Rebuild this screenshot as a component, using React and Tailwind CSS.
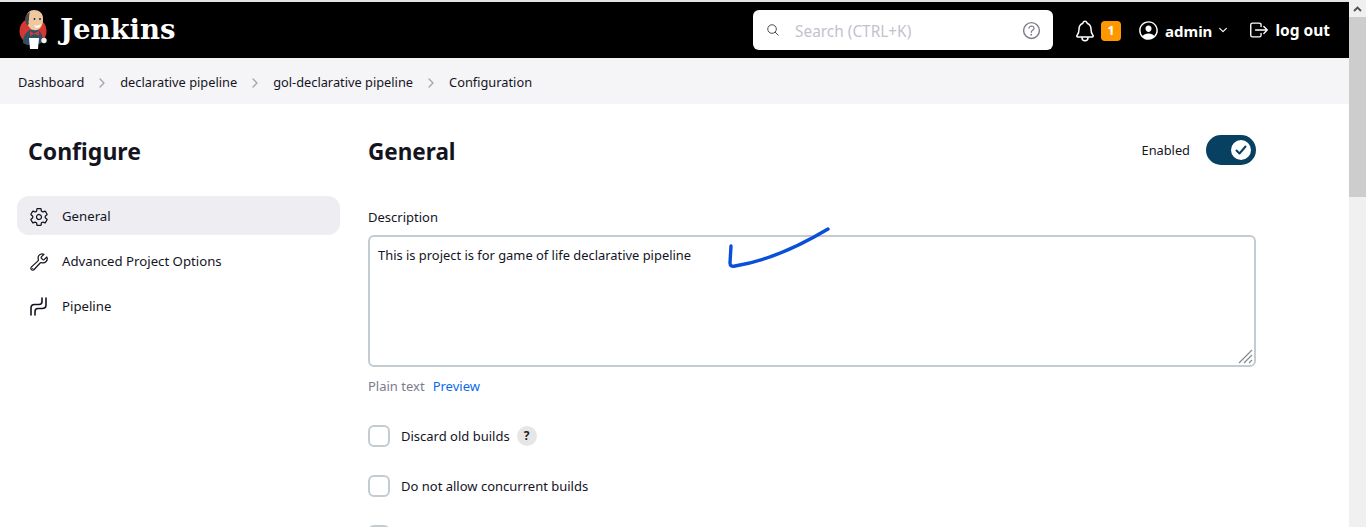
import React from "react";
import {
  IoSettingsOutline,
  IoBuildOutline,
  IoNotificationsOutline,
  IoPersonCircleOutline,
  IoLogOutOutline,
  IoHelpCircleOutline,
  IoSearchOutline,
  IoChevronForward,
  IoChevronDown,
} from "react-icons/io5";

function Logo() {
  return (
    <svg width="32" height="40" viewBox="0 0 32 40" className="shrink-0">
      <circle cx="15" cy="21" r="13.500" fill="#d33833" />
      <path d="M5 33c0-7 3-11 7-13h8c3 2 5 6 5 12l-4 2-12 1z" fill="#2f4f63" />
      <path d="M8 9C8 3 12 0 16 0c5 0 9 3 9 8 0 3 0 5-1 7-1 3-4 6-8 5-4 0-7-5-8-11z" fill="#eec9a0" />
      <path d="M7 8c1-3 3-5 5-6-1 3-1 5-1 7 0 2-1 3 0 5-1 1-2 1-2 1-1-2-2-4-2-7z" fill="#4a4a4a" />
      <circle cx="16.500" cy="9" r="0.900" fill="#222" />
      <circle cx="22" cy="9" r="0.900" fill="#222" />
      <path d="M16 15c2 1 4 1 7-1-1 3-2 4-4 4s-2-1-3-3z" fill="#fff" opacity="0.85" />
      <path d="M12 21l4 2.500 5-2.500v4.500l-5-1.500-4 2z" fill="#d33833" />
      <path d="M11 28h10l-1 11h-8z" fill="#fff" />
      <circle cx="26" cy="30.500" r="2.700" fill="#f2f2f2" />
    </svg>
  );
}

function PipelineIcon() {
  return (
    <svg width="20" height="20" viewBox="0 0 20 20" fill="none" stroke="#14141f" strokeWidth="1.600" strokeLinecap="round">
      <path d="M2 18V11Q2 7.500 5.500 7.500H10Q13 7.500 13 4.500V1" />
      <path d="M6 18V14.500Q6 11.500 9 11.500H13Q17 11.500 17 8V1" />
    </svg>
  );
}

function NavItem({ icon, label, active }) {
  return (
    <div className={`flex h-[39px] items-center gap-[13px] rounded-[12px] pl-[12px] pt-[2px] text-[13.200px] ${active ? "bg-[#ededf2]" : ""}`}>
      <span className="flex w-[20px] justify-center text-[#14141f]">{icon}</span>
      <span>{label}</span>
    </div>
  );
}

function Check({ label, help }) {
  return (
    <div className="flex h-[22px] items-center">
      <span className="h-[22px] w-[22px] shrink-0 rounded-[6px] border-2 border-[#c3ccd1] bg-white" />
      <span className="ml-[11px] mt-[1px] text-[13px] text-[#14141f]">{label}</span>
      {help && (
        <span className="ml-[7px] flex h-[20px] w-[20px] items-center justify-center rounded-full bg-[#e6e6e6] text-[12px] font-bold text-[#222]">?</span>
      )}
    </div>
  );
}

function Crumb({ children }) {
  return <span className="text-[12.800px] text-[#14141f]">{children}</span>;
}

function Sep() {
  return <IoChevronForward className="mx-[11px] text-[#a3a3b3]" size={14} />;
}

export default function App() {
  return (
    <div className="flex h-[527px] w-[1366px] overflow-hidden bg-white text-[#14141f] [font-family:'Noto_Sans',sans-serif]">
      <div className="flex min-w-0 flex-1 flex-col">
        <div className="h-[2px] bg-[#e2e2e2]" />
        <header className="flex h-[56px] items-center bg-black pl-[18px] pr-[19px] text-white">
          <Logo />
          <span className="ml-[10px] text-[27.500px] font-bold [font-family:'DejaVu_Serif',serif]">Jenkins</span>
          <div className="ml-auto flex h-[40px] w-[300px] items-center rounded-[6px] bg-white pl-[13px] pr-[10px]">
            <IoSearchOutline size={14} className="text-[#333]" />
            <span className="ml-[15px] mt-[3px] text-[15.400px] text-[#c2c2cc]">Search (CTRL+K)</span>
            <IoHelpCircleOutline size={23} className="ml-auto text-[#7c7c8c]" />
          </div>
          <IoNotificationsOutline size={24} className="ml-[20px] mt-[1px]" />
          <span className="ml-[4px] mt-[1px] flex h-[20px] w-[20px] items-center justify-center rounded-[4px] bg-[#ff9800] text-[13px] font-bold">1</span>
          <IoPersonCircleOutline size={23} className="ml-[16px]" />
          <span className="ml-[5px] mt-[2px] text-[15px] font-bold">admin</span>
          <IoChevronDown size={12} className="ml-[5px]" />
          <IoLogOutOutline size={22} className="ml-[19px]" />
          <span className="ml-[5px] mt-[2px] text-[15.500px] font-bold">log out</span>
        </header>
        <nav className="flex h-[46px] items-center bg-[#f5f5f7] pl-[18px] pt-[3px]">
          <Crumb>Dashboard</Crumb>
          <Sep />
          <Crumb>declarative pipeline</Crumb>
          <Sep />
          <Crumb>gol-declarative pipeline</Crumb>
          <Sep />
          <Crumb>Configuration</Crumb>
        </nav>
        <div className="flex flex-1 overflow-hidden">
          <aside className="ml-[17px] w-[323px] shrink-0">
            <h1 className="mt-[30px] pl-[11px] text-[23px] font-bold leading-[34px]">Configure</h1>
            <div className="mt-[28px] flex flex-col gap-[6px]">
              <NavItem active icon={<IoSettingsOutline size={24} />} label="General" />
              <NavItem icon={<IoBuildOutline size={24} />} label="Advanced Project Options" />
              <NavItem icon={<PipelineIcon />} label="Pipeline" />
            </div>
          </aside>
          <main className="relative ml-[28px] w-[888px] shrink-0">
            <div className="mt-[30px] flex h-[34px] items-center justify-between">
              <h2 className="pt-[2px] text-[22.500px] font-bold leading-[34px]">General</h2>
              <div className="-mt-[3px] flex items-center gap-[16px]">
                <span className="mt-[3px] text-[12.800px]">Enabled</span>
                <span className="flex h-[30px] w-[50px] items-center justify-end rounded-full bg-[#084062] pr-[5px]">
                  <span className="flex h-[20px] w-[20px] items-center justify-center rounded-full bg-white">
                    <svg width="12" height="12" viewBox="0 0 12 12" fill="none" stroke="#084062" strokeWidth="2" strokeLinecap="round" strokeLinejoin="round">
                      <path d="M1.500 6.500L4.500 9.500L10.500 2.500" />
                    </svg>
                  </span>
                </span>
              </div>
            </div>
            <label className="mt-[39px] block text-[13px] leading-[20px]">Description</label>
            <div className="relative mt-[8px]">
              <textarea
                readOnly
                defaultValue="This is project is for game of life declarative pipeline"
                className="block h-[132px] w-full resize-none rounded-[6px] border-2 border-[#c3ccd1] bg-white px-[8px] py-[8px] text-[12.900px] leading-[20px] text-[#14141f] outline-none"
              />
              <svg className="pointer-events-none absolute bottom-[3px] right-[3px]" width="15" height="15" viewBox="0 0 15 15" fill="none" stroke="#8a8a8a" strokeWidth="1.200">
                <path d="M1 14L14 1M6 14L14 6M11 14L14 11" />
              </svg>
            </div>
            <div className="mt-[9px] flex gap-[8px] text-[13px] leading-[20px]">
              <span className="text-[#7c7c8c]">Plain text</span>
              <span className="text-[#0b6aea]">Preview</span>
            </div>
            <div className="mt-[29px] flex flex-col gap-[28px]">
              <Check label="Discard old builds" help />
              <Check label="Do not allow concurrent builds" />
              <Check label="" />
            </div>
            <svg className="pointer-events-none absolute left-[358px] top-[120px]" width="106" height="46" viewBox="0 0 106 46" fill="none">
              <path d="M102 5C82 17 46 36 9 42Q4 43 4 39L5 22" stroke="#0a4fd8" strokeWidth="3.400" strokeLinecap="round" strokeLinejoin="round" />
            </svg>
          </main>
        </div>
      </div>
      <div className="flex w-[17px] shrink-0 flex-col bg-[#f0f0f0]">
        <div className="flex h-[17px] items-center justify-center">
          <svg width="9" height="6" viewBox="0 0 9 6" fill="none" stroke="#505050" strokeWidth="1.800"><path d="M1 5l3.500-3.500L8 5" /></svg>
        </div>
        <div className="h-[180px] bg-[#cdcdcd]" />
      </div>
    </div>
  );
}
